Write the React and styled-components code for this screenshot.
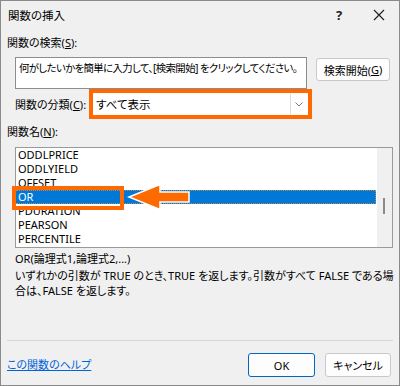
import styled, { createGlobalStyle } from "styled-components";

const GlobalStyle = createGlobalStyle`
  html, body {
    margin: 0;
    padding: 0;
    background: #f0f0f0;
  }
`;

const Dialog = styled.div`
  width: 400px;
  height: 386px;
  box-sizing: border-box;
  border: 1px solid #8a8a8a;
  background: #f0f0f0;
  display: flex;
  flex-direction: column;
  font-family: "Noto Sans", "Noto Sans CJK JP", sans-serif;
  font-feature-settings: "palt";
  font-size: 11px;
  color: #000;
`;

const TitleBar = styled.div`
  height: 27px;
  display: flex;
  align-items: center;
  padding-left: 7px;
`;

const Title = styled.span`
  flex: 1;
  font-size: 11.5px;
`;

const TitleButton = styled.span`
  width: 40px;
  height: 27px;
  display: flex;
  align-items: center;
  justify-content: center;
  font-size: 13px;
  font-weight: bold;
  color: #222;
`;

const Body = styled.div`
  flex: 1;
  display: flex;
  flex-direction: column;
  padding: 0 6px;
`;

const Label = styled.div`
  line-height: 16px;
  margin-top: ${(p) => p.$top || 0}px;
  white-space: nowrap;
`;

const Key = styled.span`
  text-decoration: underline;
`;

const SearchRow = styled.div`
  display: flex;
  align-items: flex-start;
  margin-top: 6px;
  padding-left: 8px;
`;

const SearchBox = styled.div`
  width: 292px;
  height: 32px;
  box-sizing: border-box;
  background: #fff;
  border: 1px solid #8d8d8d;
  padding: 3px 2px 3px 3px;
  font-size: 10.4px;
  line-height: 14px;
  letter-spacing: -0.6px;
  white-space: nowrap;
  overflow: hidden;
`;

const PushButton = styled.button`
  font: inherit;
  font-feature-settings: "palt";
  color: #000;
  width: ${(p) => p.$width}px;
  height: ${(p) => p.$height || 24}px;
  margin: ${(p) => p.$margin || 0};
  background: #fdfdfd;
  border: 1px solid ${(p) => (p.$primary ? "#0067c0" : "#c9c9c9")};
  border-radius: 3px;
  padding: 0;
  display: flex;
  align-items: center;
  justify-content: center;
`;

const CategoryRow = styled.div`
  display: flex;
  align-items: center;
  padding-left: 8px;
`;

const CategoryLabel = styled.span`
  width: 74px;
  white-space: nowrap;
`;

const Highlight = styled.div`
  width: 223px;
  height: 30px;
  box-sizing: border-box;
  border: 4px solid #ff6a00;
  background: #fff;
  display: flex;
  align-items: stretch;
`;

const SelectText = styled.span`
  flex: 1;
  display: flex;
  align-items: center;
  padding-left: 3px;
  font-size: 11.5px;
`;

const SelectArrow = styled.span`
  width: 16px;
  border-left: 1px solid #dcdcdc;
  margin: 1px 1px 1px 0;
  display: flex;
  align-items: center;
  justify-content: center;
`;

const ListBox = styled.div`
  position: relative;
  margin: 7px 0 0 8px;
  width: 378px;
  height: 101px;
  box-sizing: border-box;
  border: 1px solid #9a9a9a;
  background: #fff;
  display: flex;
`;

const ListItems = styled.div`
  flex: 1;
  overflow: hidden;
`;

const Item = styled.div`
  height: 14px;
  line-height: 14px;
  padding-left: 2px;
  box-sizing: border-box;
  background: ${(p) => (p.$selected ? "#0078d7" : "transparent")};
  color: ${(p) => (p.$selected ? "#fff" : "#000")};
  border: 1px dotted ${(p) => (p.$selected ? "#b98a52" : "transparent")};
  border-left: none;
  margin-right: 1px;
  display: flex;
  align-items: center;
`;

const ScrollTrack = styled.div`
  width: 15px;
  background: #f0f0f0;
  position: relative;
`;

const ScrollThumb = styled.div`
  position: absolute;
  left: 6px;
  top: 50px;
  width: 2px;
  height: 16px;
  background: #8a8a8a;
`;

const Marker = styled.div`
  position: absolute;
  left: -4px;
  top: 38px;
  width: 112px;
  height: 24px;
  box-sizing: border-box;
  border: 4px solid #ff6a00;
`;

const Pointer = styled.svg`
  position: absolute;
  left: 108px;
  top: 33px;
`;

const Description = styled.div`
  padding-left: 8px;
`;

const Syntax = styled.div`
  margin-top: 3px;
  line-height: 16px;
`;

const Explain = styled.div`
  margin-top: 1px;
  line-height: 15px;
  white-space: nowrap;
`;

const Separator = styled.div`
  margin-top: auto;
  height: 1px;
  background: #d6d6d6;
`;

const Footer = styled.div`
  display: flex;
  align-items: center;
  padding: 12px 2px 8px 0;
  gap: 10px;
`;

const HelpLink = styled.a`
  flex: 1;
  color: #0063d8;
  text-decoration: underline;
  margin-top: -3px;
  cursor: pointer;
`;

const functions = [
  "ODDLPRICE",
  "ODDLYIELD",
  "OFFSET",
  "OR",
  "PDURATION",
  "PEARSON",
  "PERCENTILE",
];

export default function App() {
  return (
    <>
      <GlobalStyle />
      <Dialog>
        <TitleBar>
          <Title>関数の挿入</Title>
          <TitleButton>?</TitleButton>
          <TitleButton>
            <svg width="12" height="12" viewBox="0 0 12 12">
              <path d="M1 1 L11 11 M11 1 L1 11" stroke="#222" strokeWidth="1.2" />
            </svg>
          </TitleButton>
        </TitleBar>
        <Body>
          <Label $top={7}>
            関数の検索(<Key>S</Key>):
          </Label>
          <SearchRow>
            <SearchBox>何がしたいかを簡単に入力して、[検索開始] をクリックしてください。</SearchBox>
            <PushButton $width={74} $height={23} $margin="1px 0 0 9px">
              検索開始(<Key>G</Key>)
            </PushButton>
          </SearchRow>
          <CategoryRow>
            <CategoryLabel>
              関数の分類(<Key>C</Key>):
            </CategoryLabel>
            <Highlight>
              <SelectText>すべて表示</SelectText>
              <SelectArrow>
                <svg width="8" height="5" viewBox="0 0 8 5">
                  <path d="M0.5 0.5 L4 4 L7.5 0.5" fill="none" stroke="#777" strokeWidth="1" />
                </svg>
              </SelectArrow>
            </Highlight>
          </CategoryRow>
          <Label $top={5}>
            関数名(<Key>N</Key>):
          </Label>
          <ListBox>
            <ListItems>
              {functions.map((f) => (
                <Item key={f} $selected={f === "OR"}>
                  {f}
                </Item>
              ))}
            </ListItems>
            <ScrollTrack>
              <ScrollThumb />
            </ScrollTrack>
            <Marker />
            <Pointer width="70" height="32" viewBox="0 0 70 32">
              <path
                d="M5 16 L36 3.5 L36 11 L65 11 L65 21 L36 21 L36 28.5 Z"
                fill="#ff6a00"
                stroke="#fff"
                strokeWidth="1.5"
                strokeLinejoin="miter"
              />
            </Pointer>
          </ListBox>
          <Description>
            <Syntax>OR(論理式1,論理式2,...)</Syntax>
            <Explain>
              いずれかの引数が TRUE のとき、TRUE を返します。引数がすべて FALSE である場
              <br />
              合は、FALSE を返します。
            </Explain>
          </Description>
          <Separator />
          <Footer>
            <HelpLink>この関数のヘルプ</HelpLink>
            <PushButton $width={67} $primary>
              OK
            </PushButton>
            <PushButton $width={66}>キャンセル</PushButton>
          </Footer>
        </Body>
      </Dialog>
    </>
  );
}
